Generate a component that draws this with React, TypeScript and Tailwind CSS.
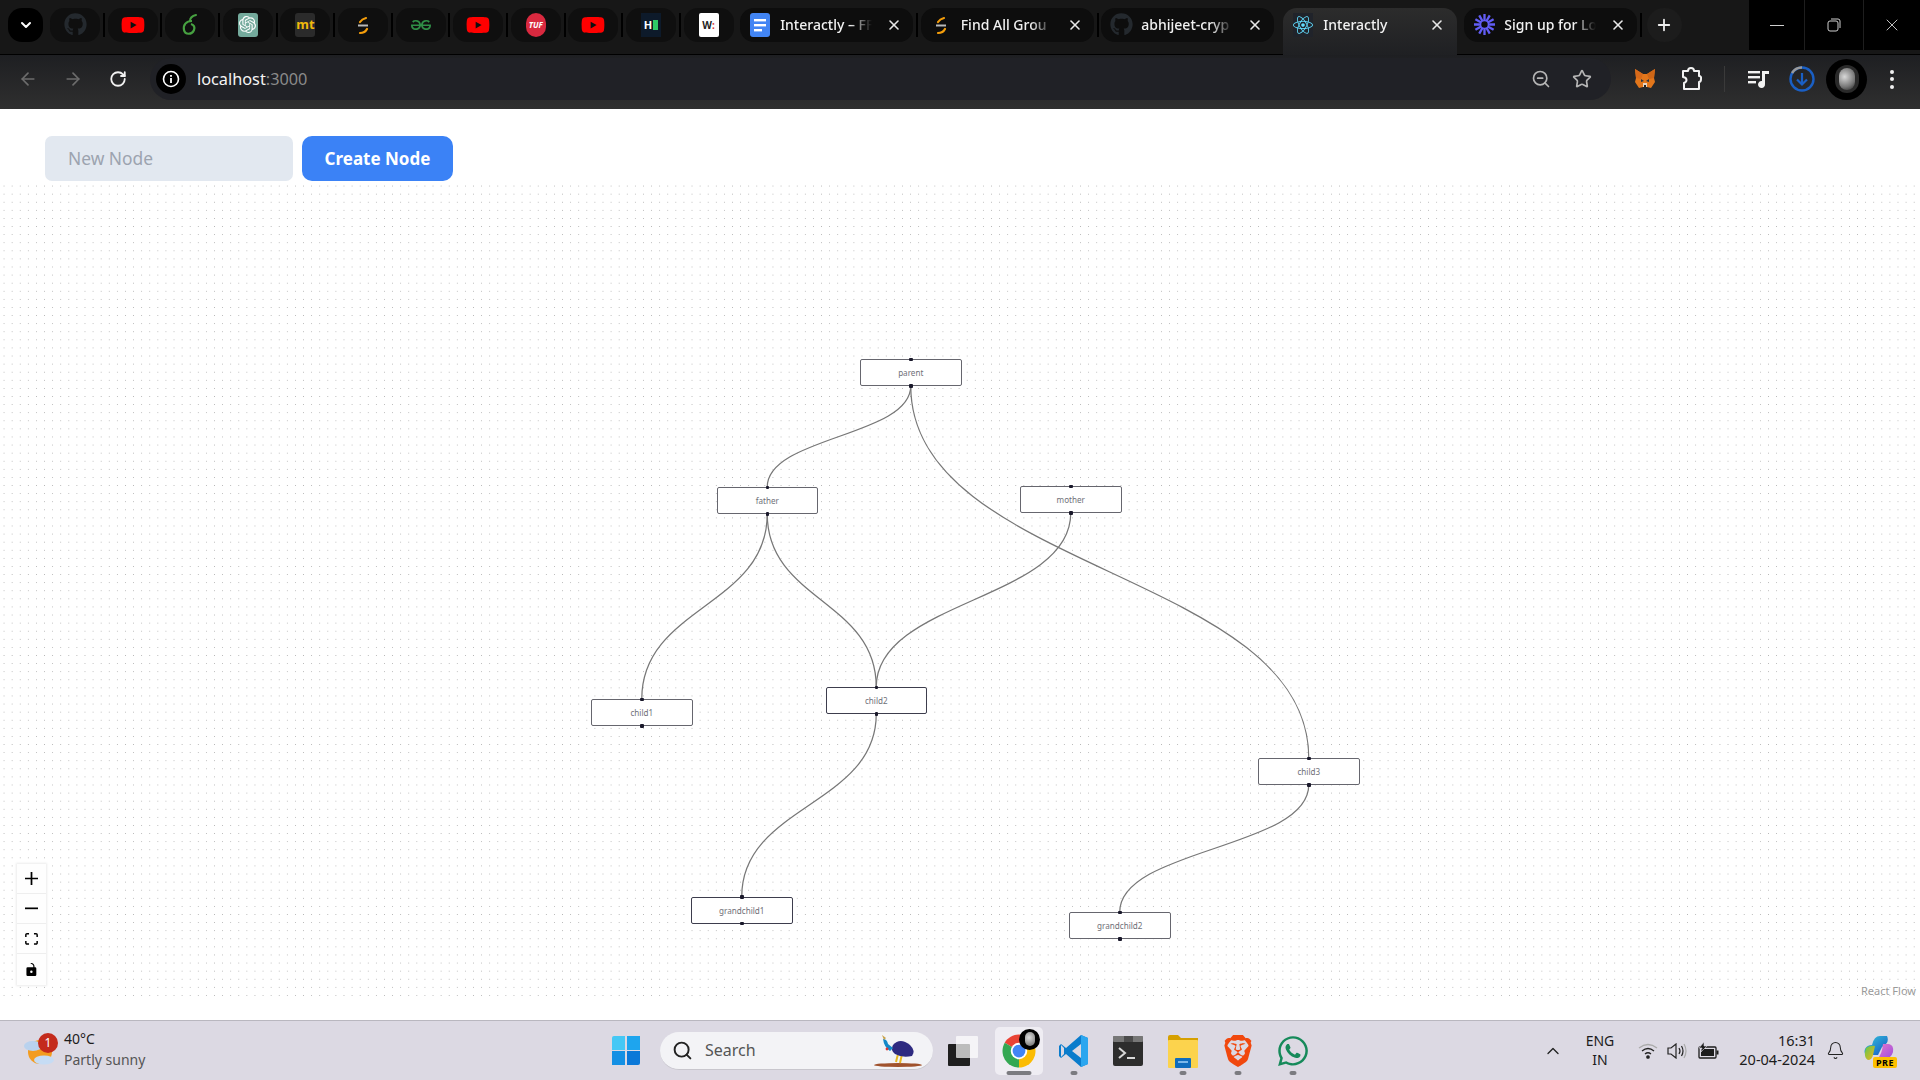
import React from "react";
import { FaGithub, FaYoutube, FaReact, FaWhatsapp } from "react-icons/fa";
import { SiOpenai, SiGeeksforgeeks, SiLoom, SiBrave } from "react-icons/si";
import { X, Plus, ArrowLeft, ArrowRight, RotateCw, ChevronDown, ChevronUp, ZoomOut, Star, Bell, Search } from "lucide-react";

const Algo = ({ s = 20 }: { s?: number }) => (
  <svg width={s} height={s} viewBox="0 0 20 20" fill="none">
    <path d="M12 1 L6 8" stroke="#111" strokeWidth="2" />
    <path d="M7 7 Q9 4 13 3" stroke="#f59e0b" strokeWidth="2.2" strokeLinecap="round" />
    <path d="M5 10.5 H15" stroke="#b9b9b9" strokeWidth="2" />
    <path d="M14 14 Q12 18 7 18" stroke="#f59e0b" strokeWidth="2.2" strokeLinecap="round" />
  </svg>
);

const Docs = () => (
  <svg width="20" height="24" viewBox="0 0 20 24">
    <rect width="20" height="24" rx="3" fill="#4285f4" />
    <rect x="4" y="6" width="12" height="2.4" fill="#fff" />
    <rect x="4" y="11" width="12" height="2.4" fill="#fff" />
    <rect x="4" y="16" width="8" height="2.4" fill="#fff" />
  </svg>
);

const Overleaf = () => (
  <svg width="20" height="24" viewBox="0 0 20 24" fill="none">
    <path d="M16 2 C12 3 10 5 10 8" stroke="#47a141" strokeWidth="2" strokeLinecap="round" />
    <path d="M12 8 C6 8 3 12 4 17 C5 22 12 22 14 17 C15 14 14 12 11 11" stroke="#47a141" strokeWidth="2.2" />
  </svg>
);

const pinned: React.ReactNode[] = [
  <FaGithub size={23} color="#24292e" />,
  <FaYoutube size={24} color="#ff0000" />,
  <Overleaf />,
  <div className="w-5 h-6 rounded-[3px] bg-[#74aa9c] flex items-center justify-center"><SiOpenai size={17} color="#fff" /></div>,
  <div className="w-5 h-6 rounded-[3px] bg-[#2b2b2b] flex items-center justify-center text-[#f0b90b] text-[13px] font-bold leading-none">mt</div>,
  <Algo />,
  <SiGeeksforgeeks size={20} color="#2f8d46" />,
  <FaYoutube size={24} color="#ff0000" />,
  <div className="w-5 h-6 rounded-full bg-[#d9293f] flex items-center justify-center text-white text-[8px] font-bold italic leading-none">TUF</div>,
  <FaYoutube size={24} color="#ff0000" />,
  <div className="w-5 h-6 bg-[#0d1a2a] flex items-center justify-center gap-px"><span className="text-white text-[11px] font-bold leading-none">H</span><span className="w-[5px] h-[10px] bg-[#2ec866]" /></div>,
  <div className="w-5 h-6 rounded-[2px] bg-white flex items-center justify-center text-[#222] text-[10px] font-bold leading-none">W<span className="text-[#d33]">:</span></div>,
];

const Fade = ({ children }: { children: React.ReactNode }) => (
  <span className="block w-[92px] overflow-hidden whitespace-nowrap text-[14px] leading-[16px] font-medium text-[#f1f1f1] [mask-image:linear-gradient(to_right,#000_76%,transparent_100%)]">{children}</span>
);

const Tab = ({ icon, title, active }: { icon: React.ReactNode; title: string; active?: boolean }) => (
  <div className={active
    ? "w-[174px] h-[48px] mt-[14px] pb-[14px] rounded-t-[14px] bg-[linear-gradient(#2c2c2c,#1f2023)] flex items-center shrink-0"
    : "w-[173px] h-[34px] rounded-[14px] bg-[#0d0d0d] flex items-center shrink-0"}>
    <div className="w-[40px] flex justify-center shrink-0">{icon}</div>
    <Fade>{title}</Fade>
    <X size={16} strokeWidth={2.4} color="#e8e8e8" className="ml-[14px]" />
  </div>
);

const Sep = () => <div className="w-[2px] h-[24px] bg-black shrink-0 mx-[2.8px]" />;

function TabStrip() {
  return (
    <div className="h-[55px] pb-[5px] bg-[#171717] flex items-center shrink-0 border-b border-black">
      <div className="w-[35px] h-[34px] ml-2 mr-[7px] rounded-[14px] bg-black flex items-center justify-center shrink-0">
        <ChevronDown size={16} strokeWidth={3} color="#fff" />
      </div>
      {pinned.map((p, i) => (
        <React.Fragment key={i}>
          <div className="w-[50px] h-[34px] rounded-[14px] bg-[#0f0f0f] flex items-center justify-center shrink-0">{p}</div>
          {i < 11 ? <Sep /> : null}
        </React.Fragment>
      ))}
      <div className="w-[6.6px] shrink-0" />
      <Tab icon={<Docs />} title="Interactly – FF" />
      <Sep />
      <Tab icon={<Algo />} title="Find All Grou" />
      <Sep />
      <Tab icon={<FaGithub size={23} color="#24292e" />} title="abhijeet-cryp" />
      <div className="w-[9px] shrink-0" />
      <Tab active icon={<div className="w-5 h-6 bg-[#20232a] flex items-center justify-center"><FaReact size={20} color="#61dafb" /></div>} title="Interactly" />
      <div className="w-[7px] shrink-0" />
      <Tab icon={<SiLoom size={21} color="#625df5" />} title="Sign up for Lo" />
      <Sep />
      <div className="w-[35px] h-[34px] ml-[2px] rounded-full bg-[#1c1c1c] flex items-center justify-center shrink-0">
        <Plus size={18} strokeWidth={2.4} color="#eee" />
      </div>
      <div className="flex-1" />
      <div className="w-[171px] h-[50px] self-start bg-black flex shrink-0">
        <div className="w-[56px] border-r border-[#1e1e1e] flex items-center justify-center">
          <div className="w-[14px] h-px bg-[#cfcfcf]" />
        </div>
        <div className="w-[59px] border-r border-[#1e1e1e] flex items-center justify-center">
          <svg width="14" height="14" viewBox="0 0 14 14" fill="none" stroke="#cfcfcf">
            <rect x="1" y="3" width="10" height="10" rx="2" />
            <path d="M4 1 H11 Q13 1 13 3 V10" />
          </svg>
        </div>
        <div className="flex-1 flex items-center justify-center">
          <X size={20} strokeWidth={1} color="#e6e6e6" />
        </div>
      </div>
    </div>
  );
}

const Fox = () => (
  <svg width="22" height="22" viewBox="0 0 22 22">
    <polygon points="1,1 9,6 13,6 21,1 20,10 21,14 17,20 13,19 9,19 5,20 1,14 2,10" fill="#e2761b" />
    <polygon points="1,1 9,6 7,11 2,10" fill="#d6691a" />
    <polygon points="21,1 13,6 15,11 20,10" fill="#cf6616" />
    <polygon points="7,11 10,13 7,14" fill="#233447" />
    <polygon points="15,11 12,13 15,14" fill="#233447" />
    <polygon points="9,15 13,15 13,19 9,19" fill="#e4d4c4" />
    <polygon points="10,17 12,17 12,19 10,19" fill="#222" />
  </svg>
);

function Toolbar() {
  return (
    <div className="h-[54px] pb-[6px] bg-[linear-gradient(#1e1f22,#2f2f2f)] flex items-center shrink-0">
      <div className="w-[45px] ml-[5px] flex justify-center"><ArrowLeft size={20} color="#6c6c6c" strokeWidth={2} /></div>
      <div className="w-[45px] flex justify-center"><ArrowRight size={20} color="#6c6c6c" strokeWidth={2} /></div>
      <div className="w-[45px] flex justify-center"><RotateCw size={18} color="#f2f2f2" strokeWidth={2.4} /></div>
      <div className="w-[1461px] h-[42px] ml-[10px] rounded-full bg-[#202126] flex items-center shrink-0">
        <div className="w-[30px] h-[30px] ml-[6px] rounded-full bg-black flex items-center justify-center shrink-0">
          <svg width="18" height="18" viewBox="0 0 18 18" fill="none">
            <circle cx="9" cy="9" r="7.5" stroke="#fff" strokeWidth="1.6" />
            <rect x="8.1" y="8" width="1.8" height="5" fill="#fff" />
            <rect x="8.1" y="5" width="1.8" height="1.8" fill="#fff" />
          </svg>
        </div>
        <span className="ml-[11px] text-[16.3px] leading-none text-[#f4f4f4]">localhost<span className="text-[#8a8a8a]">:3000</span></span>
        <div className="flex-1" />
        <ZoomOut size={20} color="#b5b5b5" strokeWidth={2} />
        <Star size={20} color="#b5b5b5" strokeWidth={2} className="ml-[21px] mr-[19px]" />
      </div>
      <div className="w-[40px] ml-[14px] flex justify-center"><Fox /></div>
      <div className="w-[40px] ml-[6px] flex justify-center">
        <svg width="22" height="24" viewBox="0 0 22 24" fill="none" stroke="#f2f2f2" strokeWidth="2" strokeLinejoin="round">
          <path d="M3 4 H8 Q8 1 11 1 Q14 1 14 4 H19 V9 Q21.5 9 21 12 Q21 15 19 15 V22 H4 V16 Q6.5 15 6.5 13 Q6.5 10.5 3 10 Z" />
        </svg>
      </div>
      <div className="w-px h-[26px] ml-[13px] bg-[#3a3a3a]" />
      <div className="w-[40px] ml-[14px] flex justify-center">
        <svg width="22" height="20" viewBox="0 0 22 20" fill="#f2f2f2">
          <rect x="0" y="2" width="12" height="2.4" />
          <rect x="0" y="7" width="12" height="2.4" />
          <rect x="0" y="12" width="8" height="2.4" />
          <path d="M14 2 H21 V5 H17 V15 A3.5 3.5 0 1 1 14 12 Z" />
        </svg>
      </div>
      <div className="w-[40px] ml-[3px] flex justify-center">
        <svg width="26" height="26" viewBox="0 0 26 26" fill="none">
          <circle cx="13" cy="13" r="11.5" stroke="#1a5fc4" strokeWidth="2.4" />
          <path d="M13 1.5 A11.5 11.5 0 0 0 3 7" stroke="#9a9a9a" strokeWidth="2.4" />
          <path d="M13 7 V18 M8 13.5 L13 18.5 L18 13.5" stroke="#1a5fc4" strokeWidth="2.2" />
        </svg>
      </div>
      <div className="w-[41px] h-[41px] ml-[4px] rounded-full bg-black flex items-center justify-center">
        <div className="w-[24px] h-[28px] rounded-full bg-[#2a2a2a] flex items-center justify-center">
          <div className="w-[16px] h-[22px] rounded-full bg-[radial-gradient(circle_at_35%_40%,#d8d8d8,#777_60%,#222)]" />
        </div>
      </div>
      <div className="w-[40px] ml-[5px] flex flex-col items-center gap-[3.5px]">
        <span className="w-1 h-1 rounded-full bg-[#f0f0f0]" />
        <span className="w-1 h-1 rounded-full bg-[#f0f0f0]" />
        <span className="w-1 h-1 rounded-full bg-[#f0f0f0]" />
      </div>
    </div>
  );
}

type N = { label: string; x: number; y: number; border: string };
const nodes: N[] = [
  { label: "parent", x: 860, y: 359, border: "border-[#66666e]" },
  { label: "father", x: 716.5, y: 487, border: "border-[#66666e]" },
  { label: "mother", x: 1020, y: 486, border: "border-[#66666e]" },
  { label: "child1", x: 591, y: 699, border: "border-[#66666e]" },
  { label: "child2", x: 825.5, y: 687, border: "border-[#3d3d4d]" },
  { label: "grandchild1", x: 691, y: 896.5, border: "border-[#3d3d4d]" },
  { label: "child3", x: 1258, y: 758, border: "border-[#66666e]" },
  { label: "grandchild2", x: 1069, y: 912, border: "border-[#66666e]" },
];
const edges: [number, number][] = [[0, 1], [0, 6], [1, 3], [1, 4], [2, 4], [4, 5], [6, 7]];
const W = 101.5;
const H = 27;
const TOP = 185;

function edgePath(a: N, b: N) {
  const sx = a.x + W / 2;
  const sy = a.y + H - TOP;
  const tx = b.x + W / 2;
  const ty = b.y - TOP;
  const c = (ty - sy) / 2;
  return `M${sx},${sy} C${sx},${sy + c} ${tx},${ty - c} ${tx},${ty}`;
}

const ctl = "w-[29px] h-[30.25px] flex items-center justify-center bg-[#fefefe] border-b border-[#eeeeee]";

function Canvas() {
  return (
    <div className="relative h-[835px] shrink-0 overflow-hidden bg-white">
      <div className="h-[815px] bg-[radial-gradient(circle,#b4b4b4_0.65px,transparent_0.85px)] bg-[size:8.1px_8.1px] bg-[position:0px_-3px]" />
      <svg className="absolute left-0 top-0" width="1920" height="835" fill="none">
        {edges.map(([a, b], i) => (
          <path key={i} d={edgePath(nodes[a], nodes[b])} stroke="#777777" strokeWidth="1.25" />
        ))}
      </svg>
      {nodes.map((n) => (
        <div
          key={n.label}
          style={{ left: n.x, top: n.y - TOP }}
          className={`absolute w-[101.5px] h-[27px] pt-[1.5px] bg-white border ${n.border} rounded-[2px] flex items-center justify-center text-[8.1px] leading-none text-[#6f7078]`}
        >
          {n.label}
          <span className="absolute left-1/2 top-[-2.5px] w-[3.5px] h-[3.5px] -ml-[1.75px] rounded-[1px] bg-[#1a192b]" />
          <span className="absolute left-1/2 bottom-[-2.5px] w-[3.5px] h-[3.5px] -ml-[1.75px] rounded-[1px] bg-[#1a192b]" />
        </div>
      ))}
      <div className="absolute left-[17px] top-[678.5px] shadow-[0_0_2px_1px_rgba(0,0,0,0.08)]">
        <div className={ctl}>
          <svg width="13" height="13" viewBox="0 0 32 32"><path d="M32 18.133H18.133V32h-4.266V18.133H0v-4.266h13.867V0h4.266v13.867H32z" /></svg>
        </div>
        <div className={ctl}>
          <svg width="13" height="3" viewBox="0 0 32 5"><path d="M0 0h32v4.2H0z" /></svg>
        </div>
        <div className={ctl}>
          <svg width="13" height="12" viewBox="0 0 32 30"><path d="M3.692 4.63c0-.53.4-.938.939-.938h5.215V0H4.708C2.13 0 0 2.054 0 4.63v5.216h3.692V4.631zM27.354 0h-5.2v3.692h5.17c.53 0 .984.4.984.939v5.215H32V4.631A4.624 4.624 0 0027.354 0zm.954 24.83c0 .532-.4.94-.939.94h-5.215v3.768h5.215c2.577 0 4.631-2.13 4.631-4.707v-5.139h-3.692v5.139zm-23.677.94c-.531 0-.939-.4-.939-.94v-5.138H0v5.139c0 2.577 2.13 4.707 4.708 4.707h5.138V25.77H4.631z" /></svg>
        </div>
        <div className={ctl + " border-b-0"}>
          <svg width="11" height="13" viewBox="0 0 25 32"><path d="M21.333 10.667H19.81V7.619C19.81 3.429 16.38 0 12.19 0c-4.114 1.828-1.37 2.133.305 2.438 1.676.305 4.42 2.59 4.42 5.181v3.048H3.047A3.056 3.056 0 000 13.714v15.238A3.056 3.056 0 003.048 32h18.285a3.056 3.056 0 003.048-3.048V13.714a3.056 3.056 0 00-3.048-3.047zM12.19 24.533a3.056 3.056 0 01-3.047-3.047 3.056 3.056 0 013.047-3.048 3.056 3.056 0 013.048 3.048 3.056 3.056 0 01-3.048 3.047z" /></svg>
        </div>
      </div>
      <span className="absolute right-[4px] top-[800px] text-[11px] leading-none text-[#9a9a9a]">React Flow</span>
    </div>
  );
}

const Weather = () => (
  <div className="relative w-[31px] h-[30px] shrink-0">
    <svg width="31" height="30" viewBox="0 0 31 30">
      <circle cx="16" cy="16" r="12" fill="#f39c1f" />
      <ellipse cx="9" cy="10" rx="9" ry="5" fill="#b9d2ee" />
      <ellipse cx="20" cy="24" rx="10" ry="4.5" fill="#c6dcf4" />
    </svg>
    <span className="absolute left-[14px] top-[-3px] w-[20px] h-[20px] rounded-full bg-[#c42b1c] text-white text-[12px] leading-[20px] text-center">1</span>
  </div>
);

const Chrome = () => (
  <svg width="36" height="36" viewBox="0 0 48 48">
    <path d="M24 24 L4.95 13 A22 22 0 0 1 43.05 13 Z" fill="#ea4335" />
    <path d="M24 24 L43.05 13 A22 22 0 0 1 24 46 Z" fill="#fbbc04" />
    <path d="M24 24 L24 46 A22 22 0 0 1 4.95 13 Z" fill="#34a853" />
    <circle cx="24" cy="24" r="11" fill="#fff" />
    <circle cx="24" cy="24" r="8.5" fill="#4285f4" />
  </svg>
);

const VSCode = () => (
  <svg width="30" height="34" viewBox="0 0 30 34">
    <path d="M22 1 L29 4 V30 L22 33 L7 20 L2 24 L0 22 V12 L2 10 L7 14 Z" fill="#0a7ccc" />
    <path d="M22 1 L29 4 V30 L22 33 Z" fill="#2ba6ef" />
    <path d="M22 10 L13 17 L22 24 Z" fill="#dcd9e3" />
    <path d="M2 11 L5 14 V20 L2 23 Z" fill="#dcd9e3" />
  </svg>
);

const Terminal = () => (
  <svg width="30" height="30" viewBox="0 0 30 30">
    <rect width="30" height="30" rx="2" fill="#2d2d2d" />
    <rect width="30" height="6" rx="1" fill="#777" />
    <rect x="11" width="9" height="6" fill="#4c4c4c" />
    <path d="M6 12 L12 17 L6 22" fill="none" stroke="#d8d8d8" strokeWidth="2" />
    <rect x="14" y="21" width="8" height="2" fill="#d8d8d8" />
  </svg>
);

const Folder = () => (
  <svg width="30" height="34" viewBox="0 0 30 34">
    <path d="M0 3 Q0 1 2 1 H10 L13 4 H30 V8 H0 Z" fill="#d6a000" />
    <rect y="6" width="30" height="28" rx="1" fill="#fcd34d" />
    <rect x="7" y="24" width="16" height="10" rx="1" fill="#0f6cbd" />
    <rect x="10" y="27" width="10" height="2" fill="#7ab7ea" />
  </svg>
);

const Copilot = () => (
  <div className="relative w-[34px] h-[32px]">
    <svg width="30" height="26" viewBox="0 0 30 26" className="ml-[1px]">
      <defs>
        <linearGradient id="cp1" x1="0" y1="0" x2="1" y2="1">
          <stop offset="0" stopColor="#37c8d9" />
          <stop offset="1" stopColor="#1456c8" />
        </linearGradient>
        <linearGradient id="cp2" x1="0" y1="0" x2="1" y2="1">
          <stop offset="0" stopColor="#e878c8" />
          <stop offset="1" stopColor="#9a4de0" />
        </linearGradient>
        <linearGradient id="cp3" x1="0" y1="0" x2="1" y2="1">
          <stop offset="0" stopColor="#5ec850" />
          <stop offset="1" stopColor="#f7b418" />
        </linearGradient>
      </defs>
      <path d="M8 10 Q10 1 16 1 H23 Q26 8 18 12 L14 20 H5 Q-1 20 1 14 Q3 10 8 10 Z" fill="url(#cp1)" />
      <path d="M2 13 Q6 10 11 11 L9 20 Q8 25 4 25 Q-1 22 2 13 Z" fill="url(#cp3)" />
      <path d="M19 9 H25 Q30 10 29 17 Q27 24 20 24 L13 24 Q18 20 19 9 Z" fill="url(#cp2)" />
    </svg>
    <span className="absolute right-0 bottom-[-1px] w-[24px] h-[11px] rounded-[2px] bg-[#fdc000] text-[9px] font-bold leading-[11px] text-center tracking-[0.5px] text-black">PRE</span>
  </div>
);

const Bird = () => (
  <svg width="50" height="32" viewBox="0 0 50 32" className="absolute right-[9px] bottom-[2px]">
    <ellipse cx="24" cy="30" rx="24" ry="2" fill="#a0522d" />
    <path d="M24 19 L22 27 M28 19 L26 28" stroke="#e8b820" strokeWidth="2" />
    <path d="M19 10 Q26 2 36 10 Q42 16 38 21 Q28 23 21 19 Q16 15 19 10 Z" fill="#2e2a80" />
    <path d="M9 4 Q13 4 14 9 L19 13 L16 16 Q10 12 9 4 Z" fill="#1488c8" />
    <path d="M8 0 L12 3 L10 5 Z" fill="#c9a34a" />
    <circle cx="13" cy="14" r="1.4" fill="#d33" />
  </svg>
);

const Ind = ({ w = "w-[7px]" }: { w?: string }) => <span className={`absolute left-1/2 -translate-x-1/2 bottom-[0px] h-[4px] rounded-full bg-[#7b7b80] ${w}`} />;

function Taskbar() {
  return (
    <div className="h-[60px] bg-[#dcd9e3] border-t border-[#b9b7bf] flex items-center shrink-0 text-[#1c1c1c]">
      <div className="ml-6"><Weather /></div>
      <div className="ml-[9px] w-[90px] mb-[4px] flex flex-col gap-[6px] shrink-0">
        <span className="text-[14px] leading-[15px]">40°C</span>
        <span className="text-[14px] leading-[15px] text-[#555]">Partly sunny</span>
      </div>
      <div className="ml-[458px] w-[28px] h-[29px] grid grid-cols-2 gap-[1.5px] shrink-0">
        <span className="bg-[#45c8f5] rounded-tl-[2px]" />
        <span className="bg-[#1ea5ee]" />
        <span className="bg-[#1490e4]" />
        <span className="bg-[#0b78d8] rounded-br-[2px]" />
      </div>
      <div className="relative ml-[20px] w-[273px] h-[38px] rounded-full bg-[#f3f3f6] border-b border-[#c8c6cd] flex items-center shrink-0">
        <Search size={21} strokeWidth={2.2} color="#222" className="ml-[12px]" />
        <span className="ml-[12px] text-[16px] leading-none text-[#555]">Search</span>
        <Bird />
      </div>
      <div className="relative ml-[15px] w-[30px] h-[30px] shrink-0">
        <div className="absolute left-0 bottom-0 w-[22px] h-[22px] bg-[#1f1f1f] rounded-[1px]" />
        <div className="absolute right-0 top-0 w-[22px] h-[22px] bg-white/70 rounded-[1px]" />
      </div>
      <div className="relative ml-[17px] w-[48px] h-[48px] rounded-[5px] bg-[#efedf3] flex items-center justify-center shrink-0">
        <Chrome />
        <span className="absolute left-[24px] top-[2px] w-[21px] h-[21px] rounded-full bg-black flex items-center justify-center">
          <span className="w-[10px] h-[14px] rounded-full bg-[radial-gradient(circle_at_40%_40%,#ddd,#666)]" />
        </span>
        <Ind w="w-[25px]" />
      </div>
      <div className="relative ml-[7px] w-[48px] h-[48px] flex items-center justify-center shrink-0"><VSCode /><Ind /></div>
      <div className="ml-[6px] w-[48px] h-[48px] flex items-center justify-center shrink-0"><Terminal /></div>
      <div className="relative ml-[7px] w-[48px] h-[48px] flex items-center justify-center shrink-0"><Folder /><Ind /></div>
      <div className="relative ml-[7px] w-[48px] h-[48px] flex items-center justify-center shrink-0"><SiBrave size={32} color="#f1480e" /><Ind /></div>
      <div className="relative ml-[7px] w-[48px] h-[48px] flex items-center justify-center shrink-0"><FaWhatsapp size={34} color="#168a5a" /><Ind /></div>
      <div className="ml-[226px] w-[20px] flex justify-center shrink-0"><ChevronUp size={20} strokeWidth={1.6} color="#222" /></div>
      <div className="ml-[17px] w-[40px] mb-[2px] flex flex-col items-center gap-[4px] text-[14px] leading-[15px] shrink-0">
        <span>ENG</span>
        <span>IN</span>
      </div>
      <div className="ml-[16px] w-[24px] flex justify-center shrink-0">
        <svg width="20" height="16" viewBox="0 0 20 16" fill="none" stroke="#222" strokeWidth="1.3">
          <path d="M1 5 Q10 -2 19 5" stroke="#aaa" />
          <path d="M4 8 Q10 3 16 8" />
          <path d="M7 11 Q10 8.5 13 11" />
          <circle cx="10" cy="14" r="1.2" fill="#222" />
        </svg>
      </div>
      <div className="ml-[5px] w-[24px] flex justify-center shrink-0">
        <svg width="20" height="16" viewBox="0 0 20 16" fill="none" stroke="#222" strokeWidth="1.2">
          <path d="M1 5 H4 L9 1 V15 L4 11 H1 Z" />
          <path d="M12 5 Q14 8 12 11 M14.5 3 Q17.5 8 14.5 13" />
          <path d="M17 1 Q21 8 17 15" stroke="#aaa" />
        </svg>
      </div>
      <div className="ml-[7px] w-[24px] flex justify-center shrink-0">
        <svg width="22" height="17" viewBox="0 0 22 17">
          <path d="M3 5 H18 Q19 5 19 6 V15 Q19 16 18 16 H3 Q2 16 2 15 V6 Q2 5 3 5 Z" fill="none" stroke="#1c1c1c" strokeWidth="1.3" />
          <rect x="4" y="7" width="13" height="7" fill="#1c1c1c" />
          <rect x="19.5" y="8.5" width="2" height="4" fill="#1c1c1c" />
          <path d="M7 0 L2 6 H5 L4 10 L10 4 H7 Z" fill="#1c1c1c" stroke="#dcd9e3" strokeWidth="0.6" />
        </svg>
      </div>
      <div className="ml-[5px] w-[90px] mb-[2px] flex flex-col items-end gap-[4px] text-[14.5px] leading-[15px] shrink-0">
        <span>16:31</span>
        <span>20-04-2024</span>
      </div>
      <div className="ml-2 w-[24px] flex justify-center shrink-0"><Bell size={19} strokeWidth={1.3} color="#222" /></div>
      <div className="ml-4 shrink-0"><Copilot /></div>
    </div>
  );
}

export default function App() {
  return (
    <div className="w-[1920px] h-[1080px] flex flex-col overflow-hidden bg-white font-['Noto_Sans','Open_Sans',sans-serif]">
      <TabStrip />
      <Toolbar />
      <div className="h-[76px] pt-[27px] pl-[45px] flex gap-[9px] bg-white shrink-0">
        <input
          readOnly
          placeholder="New Node"
          className="w-[248px] h-[45px] px-[23px] pb-[2px] rounded-[7px] bg-[#e2e8f0] text-[17.4px] outline-none placeholder:text-[#9ca3af]"
        />
        <button className="w-[151px] h-[45px] rounded-[10px] bg-[#3b82f6] text-white text-[17px] font-bold">Create Node</button>
      </div>
      <Canvas />
      <Taskbar />
    </div>
  );
}
